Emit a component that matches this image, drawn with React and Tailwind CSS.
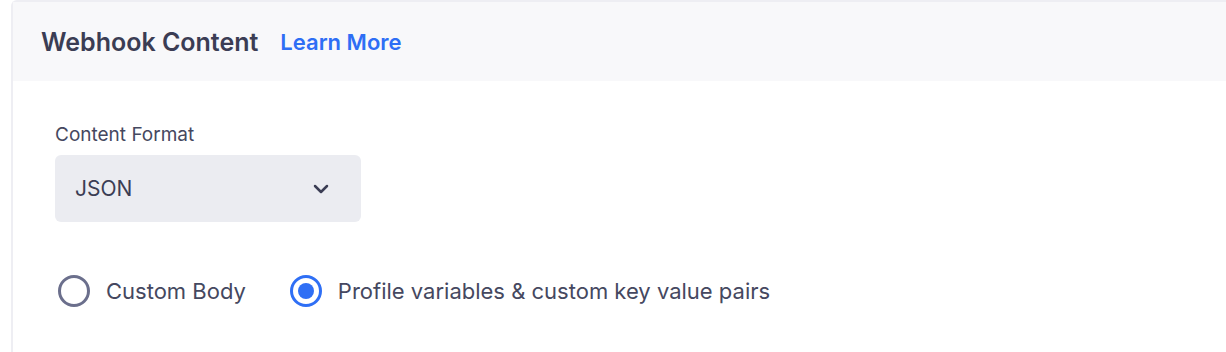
import { useState } from 'react';

function Radio({ checked, label, onClick }) {
  return (
    <label className="flex items-center gap-4 cursor-pointer" onClick={onClick}>
      <span
        className={`flex h-8 w-8 items-center justify-center rounded-full border-[3px] ${
          checked ? 'border-[#2f6ff5]' : 'border-[#6b6f8c]'
        }`}
      >
        {checked && <span className="h-4 w-4 rounded-full bg-[#2f6ff5]" />}
      </span>
      <span className="text-[22px] leading-7 text-[#454860]">{label}</span>
    </label>
  );
}

export default function App() {
  const [body, setBody] = useState('pairs');

  return (
    <div className="h-[352px] w-[1226px] overflow-hidden bg-white pl-[11px] font-['Inter',sans-serif]">
      <div className="h-full rounded-tl-md border-l-2 border-t-2 border-[#eeeef3]">
        <div className="flex h-[79px] items-center gap-[22px] bg-[#f8f8fa] pl-[28px]">
          <h2 className="text-[25px] font-semibold leading-8 text-[#3b3d54]">Webhook Content</h2>
          <a href="#" className="text-[22px] font-semibold leading-8 text-[#2e6ef5]">
            Learn More
          </a>
        </div>
        <div className="pl-[42px] pt-[42px]">
          <div className="text-[19px] leading-6 text-[#454860]">Content Format</div>
          <button className="mt-[8px] flex h-[67px] w-[306px] items-center justify-between rounded-md bg-[#ebecf1] pl-5 pr-8">
            <span className="text-[21px] text-[#3b3d54]">JSON</span>
            <svg width="16" height="10" viewBox="0 0 16 10" fill="none">
              <path d="M2 2l6 6 6-6" stroke="#3b3d54" strokeWidth="2.5" strokeLinecap="round" strokeLinejoin="round" />
            </svg>
          </button>
          <div className="mt-[53px] flex items-center gap-[44px] pl-[3px]">
            <Radio checked={body === 'custom'} label="Custom Body" onClick={() => setBody('custom')} />
            <Radio
              checked={body === 'pairs'}
              label="Profile variables & custom key value pairs"
              onClick={() => setBody('pairs')}
            />
          </div>
        </div>
      </div>
    </div>
  );
}
